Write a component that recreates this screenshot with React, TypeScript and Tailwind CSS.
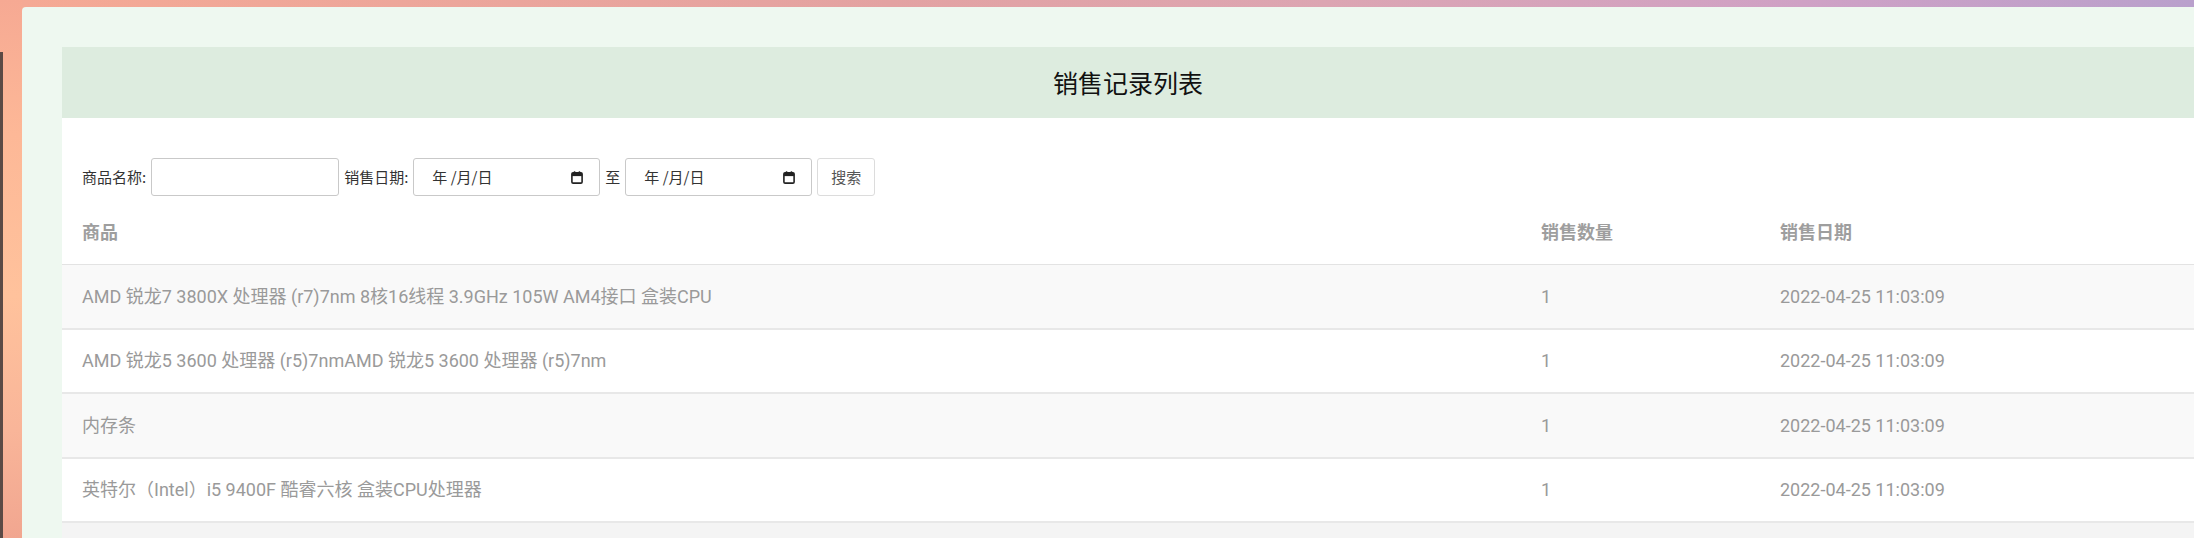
import React from "react";

const rows = [
  { name: "AMD 锐龙7 3800X 处理器 (r7)7nm 8核16线程 3.9GHz 105W AM4接口 盒装CPU", qty: 1, date: "2022-04-25 11:03:09" },
  { name: "AMD 锐龙5 3600 处理器 (r5)7nmAMD 锐龙5 3600 处理器 (r5)7nm", qty: 1, date: "2022-04-25 11:03:09" },
  { name: "内存条", qty: 1, date: "2022-04-25 11:03:09" },
  { name: "英特尔（Intel）i5 9400F 酷睿六核 盒装CPU处理器", qty: 1, date: "2022-04-25 11:03:09" },
];

function CalendarIcon() {
  return (
    <svg width="12" height="13" viewBox="0 0 12 13">
      <rect x="0.9" y="1.9" width="10.2" height="10.2" rx="1.2" fill="none" stroke="#222" strokeWidth="1.6" />
      <rect x="0.9" y="1.9" width="10.2" height="3.2" fill="#222" />
      <rect x="2.8" y="0.3" width="1.5" height="2.4" fill="#222" />
      <rect x="7.7" y="0.3" width="1.5" height="2.4" fill="#222" />
    </svg>
  );
}

function DateBox() {
  return (
    <div className="flex h-[38px] w-[187px] items-center justify-between rounded-[3px] border border-[#c9c9c9] bg-white pl-[18px] pr-[16px] text-[15px] text-[#333]">
      <span>年 /月/日</span>
      <CalendarIcon />
    </div>
  );
}

export default function App() {
  return (
    <div className="flex h-[538px] w-[2194px] overflow-hidden font-['Noto_Sans_CJK_SC',sans-serif]">
      <div className="w-[22px] shrink-0 bg-[linear-gradient(to_bottom,#f6a993_0%,#fdb897_25%,#ffc29c_55%,#f9b599_80%,#f1a690_100%)]">
        <div className="mt-[52px] h-[486px] w-[3px] bg-[#5b4a45]" />
      </div>
      <div className="flex flex-1 flex-col bg-[#f8ae95]">
        <div className="h-[7px] shrink-0 bg-[linear-gradient(to_right,#f5a994_0%,#e3a2a2_40%,#dca5b2_60%,#cfa1c5_82%,#b9a0cc_100%)]" />
        <div className="flex flex-1 flex-col rounded-tl-[4px] bg-[#eef8f0] pl-[40px] pt-[40px]">
          <div className="flex flex-1 flex-col bg-white">
            <div className="flex h-[71px] shrink-0 items-center justify-center bg-[#ddecdf] text-[25px] text-[#111]">
              销售记录列表
            </div>

            <div className="flex items-center gap-[5px] pl-[20px] pt-[40px] text-[15px] text-[#333]">
              <span>商品名称:</span>
              <div className="h-[38px] w-[188px] rounded-[3px] border border-[#c9c9c9] bg-white" />
              <span>销售日期:</span>
              <DateBox />
              <span>至</span>
              <DateBox />
              <button className="h-[38px] w-[58px] rounded-[3px] border border-[#dcdcdc] bg-white text-[15px] text-[#555]">
                搜索
              </button>
            </div>

            <div className="grid h-[69px] shrink-0 grid-cols-[1459px_239px_1fr] items-center border-b border-[#e3e3e3] pt-[4px] font-['Roboto','Noto_Sans_CJK_SC',sans-serif] text-[18px] font-bold text-[#9e9e9e]">
              <div className="pl-[20px]">商品</div>
              <div className="pl-[20px]">销售数量</div>
              <div className="pl-[20px]">销售日期</div>
            </div>

            {rows.map((r, i) => (
              <div
                key={i}
                className={`grid h-[64.5px] shrink-0 grid-cols-[1459px_239px_1fr] items-center border-b-2 border-[#e8e8e8] font-['Roboto','Noto_Sans_CJK_SC',sans-serif] text-[18px] text-[#9a9a9a] ${
                  i % 2 === 0 ? "bg-[#f9f9f9]" : "bg-white"
                }`}
              >
                <div className="pl-[20px]">{r.name}</div>
                <div className="pl-[20px]">{r.qty}</div>
                <div className="pl-[20px]">{r.date}</div>
              </div>
            ))}

            <div className="flex-1 bg-[#f4f4f4]" />
          </div>
        </div>
      </div>
    </div>
  );
}
